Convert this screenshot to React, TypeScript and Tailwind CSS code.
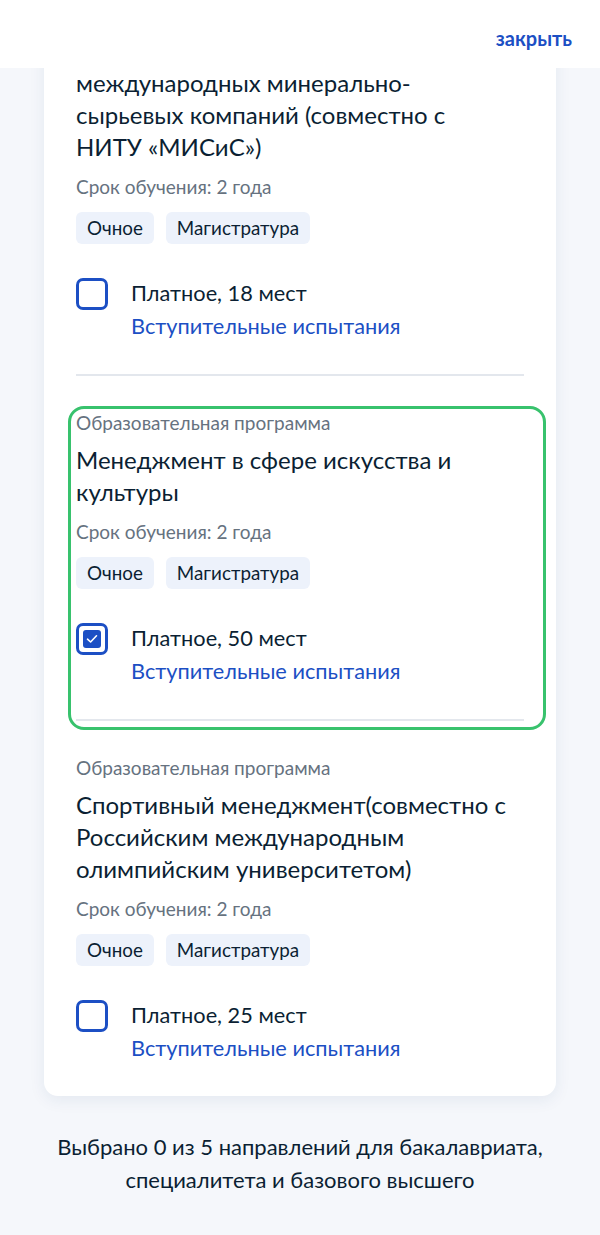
import React from "react";

const Checkbox = ({ checked }: { checked?: boolean }) => (
  <div className="w-[32px] h-[32px] shrink-0 rounded-[7px] border-[3px] border-[#1c4fc4] flex items-center justify-center bg-white">
    {checked && (
      <div className="w-[18px] h-[18px] rounded-[3px] bg-[#1c4fc4] flex items-center justify-center">
        <svg width="12" height="10" viewBox="0 0 12 10" fill="none">
          <path d="M1.5 5.2 L4.6 8 L10.5 1.8" stroke="white" strokeWidth="1.6" strokeLinecap="round" strokeLinejoin="round" />
        </svg>
      </div>
    )}
  </div>
);

const Section = ({
  label,
  title,
  places,
  checked,
  divider,
}: {
  label?: boolean;
  title: React.ReactNode;
  places: string;
  checked?: boolean;
  divider?: boolean;
}) => (
  <div className="flex flex-col">
    {label && (
      <div className="text-[19px] leading-[20px] text-[#66727f] mb-[11px]">Образовательная программа</div>
    )}
    <div className="text-[24px] leading-[32px] text-[#0b1f33]">{title}</div>
    <div className="mt-[12px] text-[19px] leading-[24px] text-[#66727f]">Срок обучения: 2 года</div>
    <div className="mt-[13px] flex gap-[12px]">
      <span className="h-[32px] px-[11px] rounded-[6px] bg-[#edf2fb] flex items-center text-[18.8px] text-[#0b1f33]">Очное</span>
      <span className="h-[32px] px-[11px] rounded-[6px] bg-[#edf2fb] flex items-center text-[18.8px] text-[#0b1f33]">Магистратура</span>
    </div>
    <div className="mt-[34px] flex gap-[23px]">
      <Checkbox checked={checked} />
      <div className="flex flex-col pt-[1px]">
        <div className="text-[21.75px] leading-[28px] text-[#0b1f33]">{places}</div>
        <div className="mt-[5px] text-[21.75px] leading-[28px] text-[#1c4fc4]">Вступительные испытания</div>
      </div>
    </div>
    {divider && <div className="mt-[34px] h-[2px] bg-[#e3e7ed]" />}
  </div>
);

export default function App() {
  return (
    <div className="relative min-h-[1235px] bg-[#f5f7fb] font-['Lato',sans-serif] overflow-hidden">
      <header className="absolute top-0 inset-x-0 h-[68px] bg-white z-10 flex items-center justify-end pr-[28px]">
        <span className="text-[20px] font-bold text-[#1c4fc4] mt-[8px]">закрыть</span>
      </header>
      <div className="px-[44px]">
        <div className="bg-white rounded-b-[14px] shadow-[0_4px_16px_rgba(30,60,120,0.08)] px-[32px] pt-[67px] pb-[34px] flex flex-col">
          <Section
            title={
              <>
                международных минерально-
                <br />
                сырьевых компаний (совместно с
                <br />
                НИТУ «МИСиС»)
              </>
            }
            places="Платное, 18 мест"
            divider
          />
          <div className="relative mt-[37px]">
            <Section label title="Менеджмент в сфере искусства и культуры" places="Платное, 50 мест" checked divider />
            <span className="absolute -left-[8px] -right-[22px] -top-[7px] -bottom-[9px] border-[3px] border-[#38c26d] rounded-[16px] pointer-events-none" />
          </div>
          <div className="mt-[37px]">
            <Section
              label
              title="Спортивный менеджмент(совместно с Российским международным олимпийским университетом)"
              places="Платное, 25 мест"
            />
          </div>
        </div>
      </div>
      <p className="mt-[34px] px-[30px] text-center text-[22px] leading-[33px] text-[#0b1f33]">
        Выбрано 0 из 5 направлений для бакалавриата,
        <br />
        специалитета и базового высшего
      </p>
    </div>
  );
}
